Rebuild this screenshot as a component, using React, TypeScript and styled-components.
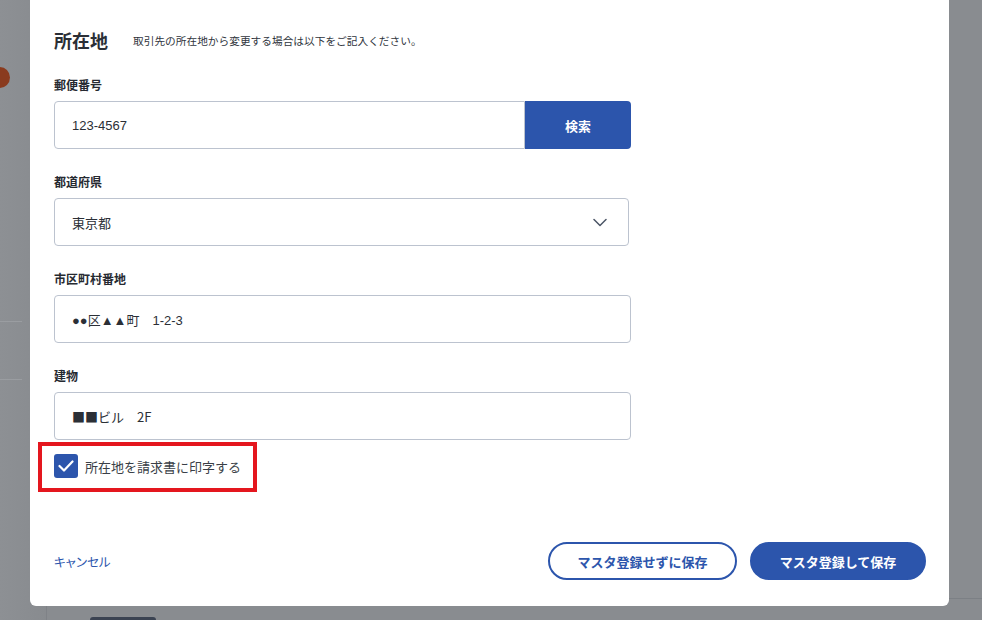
import styled, { createGlobalStyle } from 'styled-components'

const PRIMARY = '#2c55ac'

const GlobalStyle = createGlobalStyle`
  html, body {
    margin: 0;
    padding: 0;
    height: 100%;
    overflow: hidden;
  }
  body {
    font-family: "Noto Sans CJK JP", "Noto Sans", sans-serif;
    color: #2b2f36;
    background: #898c90;
  }
  * { box-sizing: border-box; }
`

/* dimmed page behind the dialog */
const Backdrop = styled.div`
  display: flex;
  width: 982px;
  height: 620px;
  background: #898c90;
`

const SideRail = styled.div`
  width: 47px;
  flex-shrink: 0;
  border-right: 1px solid #7f8287;
  background: linear-gradient(to right, #8d9094, #888b8f);
  display: flex;
  flex-direction: column;
  padding-top: 67px;
`

const Avatar = styled.span`
  width: 21px;
  height: 21px;
  margin-left: -11px;
  border-radius: 50%;
  background: #8a3b1e;
`

const RailDivider = styled.span<{ $top: number }>`
  width: 22px;
  height: 1px;
  margin-top: ${p => p.$top}px;
  background: #9a9da1;
`

const MainArea = styled.div`
  flex: 1;
  display: flex;
  flex-direction: column;
  justify-content: flex-end;
`

const BottomBar = styled.div`
  height: 22px;
  border-top: 1px solid #7c8085;
  display: flex;
  align-items: flex-end;
  padding-left: 43px;
`

const GhostButton = styled.span`
  width: 66px;
  height: 3px;
  border-radius: 4px 4px 0 0;
  background: #3b4352;
`

/* dialog */
const Overlay = styled.div`
  position: fixed;
  inset: 0;
  display: flex;
  padding: 0 33px 14px 30px;
`

const Modal = styled.div`
  flex: 1;
  background: #fff;
  border-radius: 0 0 6px 6px;
  display: flex;
  flex-direction: column;
  padding: 27px 23px 26px 24px;
`

const TitleRow = styled.div`
  display: flex;
  align-items: center;
  gap: 25px;
  height: 26px;
  margin-bottom: 23px;
`

const Title = styled.h2`
  margin: 0;
  font-size: 18px;
  font-weight: 700;
  color: #2b2f36;
`

const Lead = styled.p`
  margin: 0;
  font-size: 10.7px;
  color: #30353d;
`

const Form = styled.div`
  width: 577px;
  display: flex;
  flex-direction: column;
  gap: 24px;
`

const Field = styled.div`
  display: flex;
  flex-direction: column;
  gap: 7px;
`

const Label = styled.label`
  font-size: 12px;
  line-height: 18px;
  font-weight: 700;
  color: #262a31;
`

const InputRow = styled.div`
  display: flex;
`

const TextInput = styled.input<{ $joined?: boolean; $cjk?: boolean }>`
  flex: ${p => (p.$joined ? '1 1 auto' : 'none')};
  width: ${p => (p.$joined ? 'auto' : '100%')};
  min-width: 0;
  height: 48px;
  padding: 0 17px;
  border: 1px solid #bcc3cf;
  border-radius: ${p => (p.$joined ? '4px 0 0 4px' : '4px')};
  font-family: ${p =>
    p.$cjk
      ? '"Noto Sans CJK JP", "Liberation Sans", sans-serif'
      : '"Liberation Sans", "Noto Sans CJK JP", sans-serif'};
  font-size: 13px;
  color: #2b2f36;
  background: #fff;
  outline: none;
`

const SearchButton = styled.button`
  width: 106px;
  height: 48px;
  flex-shrink: 0;
  border: none;
  border-radius: 0 4px 4px 0;
  background: ${PRIMARY};
  color: #fff;
  font-family: inherit;
  font-size: 13px;
  font-weight: 700;
`

const SelectBox = styled.div`
  width: 575px;
  height: 48px;
  padding: 0 21px 0 17px;
  border: 1px solid #bcc3cf;
  border-radius: 4px;
  display: flex;
  align-items: center;
  justify-content: space-between;
  font-size: 13px;
  color: #2b2f36;
`

const Highlight = styled.div`
  align-self: flex-start;
  margin: 2px 0 0 -16px;
  border: 4px solid #e4161e;
  padding: 8px 12px 10px 12px;
`

const CheckLabel = styled.label`
  display: flex;
  align-items: center;
  gap: 7px;
  font-size: 13px;
  color: #3a3f47;
`

const CheckBox = styled.span`
  width: 24px;
  height: 24px;
  border-radius: 3px;
  background: ${PRIMARY};
  display: flex;
  align-items: center;
  justify-content: center;
`

const Footer = styled.div`
  margin-top: auto;
  display: flex;
  align-items: center;
  justify-content: space-between;
`

const LinkButton = styled.button`
  border: none;
  background: none;
  padding: 0;
  font-family: inherit;
  font-size: 12.5px;
  font-feature-settings: "palt";
  color: ${PRIMARY};
`

const Actions = styled.div`
  display: flex;
  gap: 13px;
`

const PillButton = styled.button<{ $filled?: boolean; $w: number }>`
  width: ${p => p.$w}px;
  height: 38px;
  border-radius: 19px;
  border: 2px solid ${PRIMARY};
  background: ${p => (p.$filled ? PRIMARY : '#fff')};
  color: ${p => (p.$filled ? '#fff' : PRIMARY)};
  font-family: inherit;
  font-size: 13px;
  font-weight: 700;
`

function Chevron() {
  return (
    <svg width="14" height="9" viewBox="0 0 14 9" fill="none">
      <path d="M1 1.5l6 6 6-6" stroke="#4b5566" strokeWidth="1.5" strokeLinecap="round" strokeLinejoin="round" />
    </svg>
  )
}

function Check() {
  return (
    <svg width="16" height="12" viewBox="0 0 16 12" fill="none">
      <path d="M1.5 6l4.5 4.5L14.5 1.5" stroke="#fff" strokeWidth="2.2" strokeLinecap="round" strokeLinejoin="round" />
    </svg>
  )
}

export default function App() {
  return (
    <>
      <GlobalStyle />
      <Backdrop>
        <SideRail>
          <Avatar />
          <RailDivider $top={233} />
          <RailDivider $top={57} />
        </SideRail>
        <MainArea>
          <BottomBar>
            <GhostButton />
          </BottomBar>
        </MainArea>
      </Backdrop>

      <Overlay>
        <Modal>
          <TitleRow>
            <Title>所在地</Title>
            <Lead>取引先の所在地から変更する場合は以下をご記入ください。</Lead>
          </TitleRow>

          <Form>
            <Field>
              <Label>郵便番号</Label>
              <InputRow>
                <TextInput $joined defaultValue="123-4567" readOnly />
                <SearchButton>検索</SearchButton>
              </InputRow>
            </Field>

            <Field>
              <Label>都道府県</Label>
              <SelectBox>
                <span>東京都</span>
                <Chevron />
              </SelectBox>
            </Field>

            <Field>
              <Label>市区町村番地</Label>
              <TextInput defaultValue="●●区▲▲町　1-2-3" readOnly />
            </Field>

            <Field>
              <Label>建物</Label>
              <TextInput $cjk defaultValue="■■ビル　2F" readOnly />
            </Field>
          </Form>

          <Highlight>
            <CheckLabel>
              <CheckBox>
                <Check />
              </CheckBox>
              所在地を請求書に印字する
            </CheckLabel>
          </Highlight>

          <Footer>
            <LinkButton>キャンセル</LinkButton>
            <Actions>
              <PillButton $w={189}>マスタ登録せずに保存</PillButton>
              <PillButton $w={176} $filled>マスタ登録して保存</PillButton>
            </Actions>
          </Footer>
        </Modal>
      </Overlay>
    </>
  )
}
